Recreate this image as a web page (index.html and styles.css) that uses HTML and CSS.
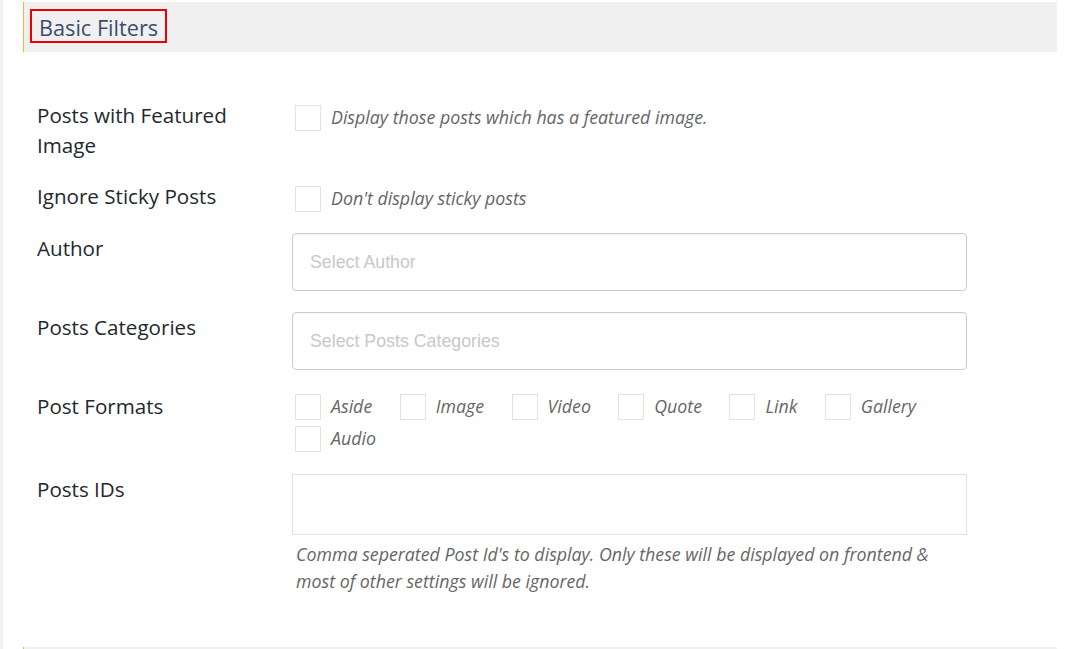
FILE: index.html
```html
<!DOCTYPE html>
<html lang="en">
<head>
<meta charset="utf-8">
<title>Basic Filters</title>
<link rel="stylesheet" href="styles.css">
</head>
<body>
<div class="page">
  <section class="panel">
    <div class="panel-head"><h2 class="panel-title">Basic Filters</h2></div>
    <div class="form">
      <div class="row">
        <div class="label">Posts with Featured Image</div>
        <div class="field">
          <label class="check"><span class="box"></span><span class="desc">Display those posts which has a featured image.</span></label>
        </div>
      </div>
      <div class="row">
        <div class="label">Ignore Sticky Posts</div>
        <div class="field">
          <label class="check"><span class="box"></span><span class="desc">Don't display sticky posts</span></label>
        </div>
      </div>
      <div class="row">
        <div class="label">Author</div>
        <div class="field">
          <div class="select">Select Author</div>
        </div>
      </div>
      <div class="row">
        <div class="label">Posts Categories</div>
        <div class="field">
          <div class="select">Select Posts Categories</div>
        </div>
      </div>
      <div class="row">
        <div class="label">Post Formats</div>
        <div class="field formats">
          <label class="fmt"><span class="box"></span><span class="desc">Aside</span></label>
          <label class="fmt"><span class="box"></span><span class="desc">Image</span></label>
          <label class="fmt"><span class="box"></span><span class="desc">Video</span></label>
          <label class="fmt"><span class="box"></span><span class="desc">Quote</span></label>
          <label class="fmt"><span class="box"></span><span class="desc">Link</span></label>
          <label class="fmt"><span class="box"></span><span class="desc">Gallery</span></label>
          <label class="fmt"><span class="box"></span><span class="desc">Audio</span></label>
        </div>
      </div>
      <div class="row">
        <div class="label">Posts IDs</div>
        <div class="field">
          <div class="textarea"></div>
          <p class="help">Comma seperated Post Id's to display. Only these will be displayed on frontend &amp; most of other settings will be ignored.</p>
        </div>
      </div>
    </div>
  </section>
  <section class="panel next">
    <div class="panel-head"></div>
  </section>
</div>
</body>
</html>
```

FILE: styles.css
```css
html, body {
  margin: 0;
  padding: 0;
  background: #fff;
}
body {
  font-family: "Open Sans", "Noto Sans", sans-serif;
  color: #23282d;
  height: 649px;
  overflow: hidden;
}
.page {
  border-left: 3px solid #f1f1f1;
  padding: 2px 21px 0 20px;
  height: 649px;
  box-sizing: border-box;
  overflow: hidden;
}
.panel-head {
  background: #f0f0f0;
  border-left: 1px solid #e8b93a;
  height: 50px;
  display: flex;
  align-items: flex-start;
  padding-left: 6px;
}
.panel-title {
  margin: 7px 0 0 0;
  font-weight: 400;
  font-size: 21.7px;
  line-height: 34px;
  color: #3d4d6c;
  border: 2px solid #ee0000;
  padding: 0 7px 0 7px;
  height: 30px;
}
.form {
  padding: 37px 0 42px 0;
}
.row {
  display: grid;
  grid-template-columns: 269px 675px;
  padding: 11px 0 10px 0;
}
.label {
  padding-left: 14px;
  padding-right: 20px;
  font-size: 20.6px;
  line-height: 30px;
}
.check {
  display: flex;
  align-items: flex-start;
  height: 31px;
}
.check .box {
  margin-top: 5px;
}
.check .desc {
  margin-top: 5px;
}
.box {
  width: 24px;
  height: 24px;
  border: 1px solid #e2e2e2;
  margin-left: 3px;
  margin-right: 10px;
  flex: none;
  background: #fff;
}
.desc {
  font-style: italic;
  font-size: 17.8px;
  color: #666;
  line-height: 25px;
}
.select {
  height: 56px;
  border: 1px solid #ccc;
  border-radius: 4px;
  box-shadow: inset 0 1px 2px rgba(0,0,0,0.05);
  font-family: "Liberation Sans", Arial, sans-serif;
  font-size: 17.8px;
  color: #c8c8c8;
  display: flex;
  align-items: center;
  padding-left: 17px;
}
.formats {
  display: flex;
  flex-wrap: wrap;
  margin-bottom: -2px;
}
.fmt {
  display: flex;
  align-items: center;
  height: 32px;
  margin: 0 24.4px 0 0;
}
.fmt .desc {
  margin-top: -2px;
}
.textarea {
  height: 59px;
  border: 1px solid #e2e2e2;
}
.help {
  margin: 6px 0 0 4px;
  font-style: italic;
  font-size: 17.8px;
  line-height: 27px;
  color: #666;
}
```
